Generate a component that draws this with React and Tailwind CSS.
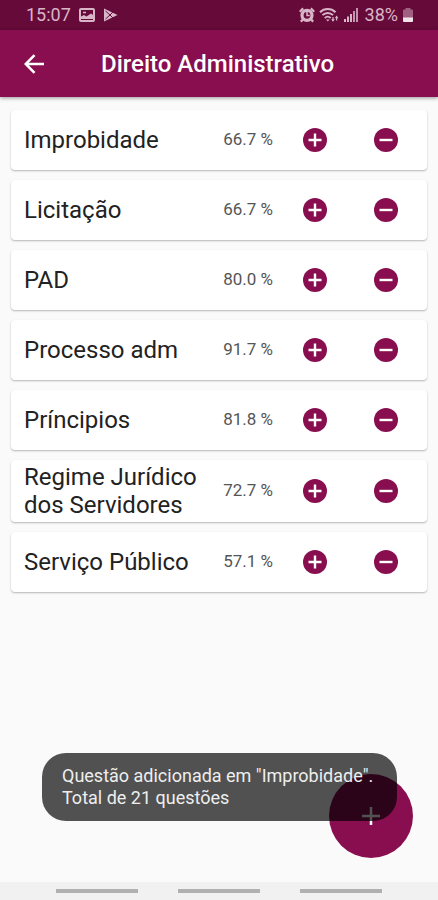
import React, { useState } from "react";

const subjects = [
  { id: 1, name: "Improbidade", score: "66.7 %" },
  { id: 2, name: "Licitação", score: "66.7 %" },
  { id: 3, name: "PAD", score: "80.0 %" },
  { id: 4, name: "Processo adm", score: "91.7 %" },
  { id: 5, name: "Príncipios", score: "81.8 %" },
  { id: 6, name: "Regime Jurídico dos Servidores", score: "72.7 %" },
  { id: 7, name: "Serviço Público", score: "57.1 %" },
];

const StatusBar = () => (
  <div className="flex h-[30px] items-center justify-between bg-[#660a3a] pr-6 pl-[26px] text-[#d9b5c8]">
    <div className="flex items-center gap-2">
      <span className="text-lg leading-none">15:07</span>
      <svg className="h-4 w-4" viewBox="0 0 16 16" fill="none" aria-hidden="true">
        <rect x="1" y="2" width="14" height="12" rx="1" stroke="currentColor" strokeWidth="2" />
        <path d="M2 12V9.500l3-1.500 2.500 1.500L12 6.500l2 1.500v4z" fill="currentColor" />
        <path d="M4 5.500h3" stroke="currentColor" strokeWidth="1.500" />
      </svg>
      <svg className="h-4 w-4" viewBox="0 0 16 16" aria-hidden="true">
        <path d="M1 1.500L14.500 8 1 14.500z" fill="currentColor" />
        <path d="M2.500 4L7 8l-4.500 4M7 8l3-3M7 8l3 3" fill="none" stroke="#660a3a" strokeWidth="1" />
      </svg>
    </div>
    <div className="flex items-center gap-1">
      <svg className="h-4 w-4" viewBox="0 0 16 16" fill="none" aria-hidden="true">
        <circle cx="8" cy="8.300" r="5" stroke="currentColor" strokeWidth="3.200" />
        <path d="M8 5v3.600h2.800" stroke="currentColor" strokeWidth="1.500" />
        <path d="M.8 4.800L4.200 1.400M15.200 4.800L11.800 1.400M3.800 12.600l-2 2M12.200 12.600l2 2" stroke="currentColor" strokeWidth="2.200" />
      </svg>
      <svg className="h-4 w-5" viewBox="0 0 20 16" fill="none" aria-hidden="true">
        <path d="M1 5.200C5.200 1 12.300 1 16.500 5.200" stroke="currentColor" strokeWidth="2" />
        <path d="M3.400 8.200c3-3 7.700-3 10.700 0" stroke="currentColor" strokeWidth="1.900" />
        <path d="M5.800 11c1.700-1.600 4.200-1.600 5.900 0" stroke="currentColor" strokeWidth="1.800" />
        <path d="M7 12.400h3.600l-1.800 2z" fill="currentColor" />
        <path d="M14 10v4M17.600 13.500v-4" stroke="currentColor" strokeWidth="1.200" />
        <path d="M12.200 12.200h3.600L14 14.800zM15.800 11.200h3.600l-1.800-2.600z" fill="currentColor" />
      </svg>
      <svg className="h-4 w-4" viewBox="0 0 16 16" fill="currentColor" aria-hidden="true">
        <rect x="1" y="12" width="2" height="3" />
        <rect x="4" y="9.500" width="2" height="5.500" />
        <rect x="7" y="7" width="2" height="8" />
        <rect x="10" y="4" width="2" height="11" opacity=".8" />
        <rect x="13" y="1" width="2" height="14" opacity=".8" />
      </svg>
      <span className="pl-[2px] text-lg leading-none">38%</span>
      <svg className="h-4 w-3" viewBox="0 0 12 16" aria-hidden="true">
        <path d="M3.500 1h5v1.500H10a1 1 0 011 1V11H1V3.500a1 1 0 011-1h1.500z" fill="currentColor" opacity=".5" />
        <path d="M1 10.500h10v3.500a1 1 0 01-1 1H2a1 1 0 01-1-1z" fill="#f3e3eb" />
      </svg>
    </div>
  </div>
);

const SubjectCard = ({ subject, onAdd, onRemove }) => (
  <li className="grid min-h-[60px] grid-cols-[1fr_71px_71px_71px] items-center rounded-[4px] bg-white py-[3px] pr-1.5 pl-[13px] shadow-[0_1px_2px_rgba(0,0,0,0.28)]">
    <h2 className="text-2xl leading-7 text-[#222222]">{subject.name}</h2>
    <span className="pr-1.5 text-right text-[17px] whitespace-nowrap text-[#555555]">
      {subject.score}
    </span>
    <button
      type="button"
      aria-label={`Adicionar questão em ${subject.name}`}
      onClick={onAdd}
      className="flex justify-center"
    >
      <svg className="h-6 w-6" viewBox="0 0 24 24" aria-hidden="true">
        <circle cx="12" cy="12" r="12" fill="#880e4f" />
        <path d="M12 5.500v13M5.500 12h13" stroke="#fff" strokeWidth="2.400" />
      </svg>
    </button>
    <button
      type="button"
      aria-label={`Remover questão de ${subject.name}`}
      onClick={onRemove}
      className="flex justify-center"
    >
      <svg className="h-6 w-6" viewBox="0 0 24 24" aria-hidden="true">
        <circle cx="12" cy="12" r="12" fill="#880e4f" />
        <path d="M5.500 12h13" stroke="#fff" strokeWidth="2.400" />
      </svg>
    </button>
  </li>
);

const App = () => {
  const [total, setTotal] = useState(21);
  const [lastAdded, setLastAdded] = useState("Improbidade");

  const handleAdd = (subject) => {
    setTotal(total + 1);
    setLastAdded(subject.name);
  };

  return (
    <div className="relative flex min-h-screen flex-col bg-[#fafafa] font-['Roboto',sans-serif]">
      <StatusBar />

      <header className="flex h-[67px] items-center bg-[#880e4f] px-6 text-white shadow-[0_1px_4px_rgba(0,0,0,0.4)]">
        <button type="button" aria-label="Voltar" className="w-[77px]">
          <svg className="h-5 w-5" viewBox="0 0 20 20" fill="none" aria-hidden="true">
            <path d="M20 10H2.500M10.500 1.200L1.700 10l8.800 8.800" stroke="currentColor" strokeWidth="2.500" />
          </svg>
        </button>
        <h1 className="text-2xl font-medium whitespace-nowrap">Direito Administrativo</h1>
      </header>

      <main className="flex-1 px-[11px] pt-[13px]">
        <ul className="flex flex-col gap-[10px]">
          {subjects.map((subject) => (
            <SubjectCard
              key={subject.id}
              subject={subject}
              onAdd={() => handleAdd(subject)}
              onRemove={() => setTotal(total - 1)}
            />
          ))}
        </ul>
      </main>

      {/* Floating add button */}
      <button
        type="button"
        aria-label="Nova matéria"
        className="absolute right-[25px] bottom-[42px] flex h-[84px] w-[84px] items-center justify-center rounded-full bg-[#880e4f]"
      >
        <svg className="h-[18px] w-[18px]" viewBox="0 0 18 18" aria-hidden="true">
          <path d="M9 0v18M0 9h18" stroke="#fff" strokeWidth="2.500" />
        </svg>
      </button>

      {/* Toast */}
      <div
        role="status"
        className="absolute right-[41px] bottom-[79px] left-[42px] rounded-3xl bg-black/68 py-3 pl-5 text-lg leading-[22px] text-[#eeeeee]"
      >
        <p>Questão adicionada em "{lastAdded}".</p>
        <p>Total de {total} questões</p>
      </div>

      {/* Gesture bar */}
      <footer className="flex h-[18px] items-center justify-between bg-[#f1f1f1] px-14">
        <span className="h-1 w-[82px] bg-[#b0b0b0]" />
        <span className="h-1 w-[82px] bg-[#b0b0b0]" />
        <span className="h-1 w-[82px] bg-[#b0b0b0]" />
      </footer>
    </div>
  );
};

export default App;
